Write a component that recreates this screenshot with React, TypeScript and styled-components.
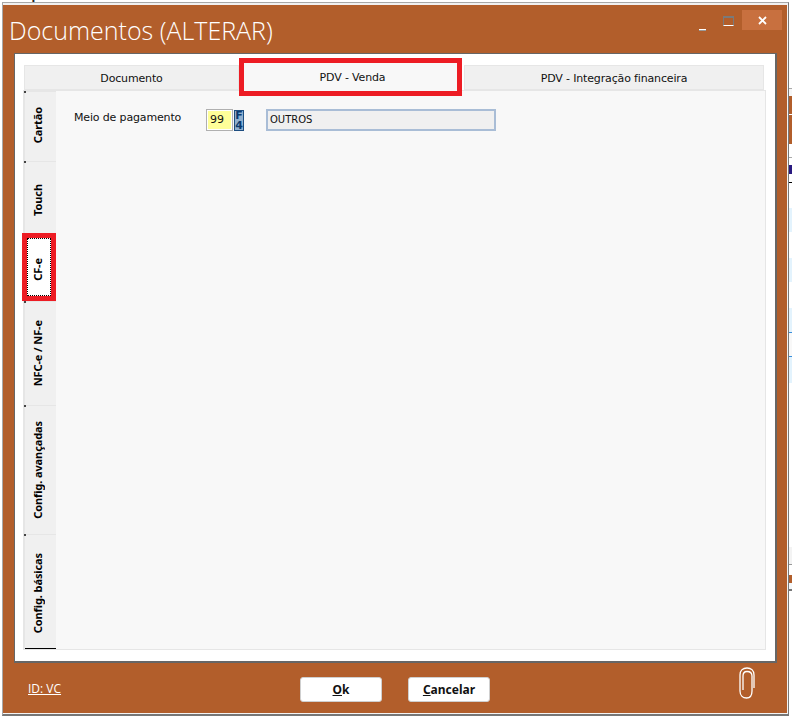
import React from "react";
import styled, { createGlobalStyle } from "styled-components";

const Global = createGlobalStyle`
  html, body { margin: 0; padding: 0; background: #fff; }
  body { font-family: "DejaVu Sans", "Liberation Sans", sans-serif; }
  * { box-sizing: border-box; }
`;

const brown = "#b25e2b";
const red = "#ed1c24";
const uiFont = `"DejaVu Sans", "Liberation Sans", sans-serif`;
const boldFont = `"Noto Sans", "Liberation Sans", sans-serif`;

const Page = styled.div`
  width: 792px;
  height: 719px;
  display: flex;
  overflow: hidden;
  background: #fff;
`;
const Main = styled.div`
  width: 789px;
  display: flex;
  flex-direction: column;
`;
const BehindText = styled.div`
  height: 2px;
  overflow: hidden;
  font: bold 11px/10px ${uiFont};
  color: #222;
  white-space: nowrap;
  & > span { display: block; margin-top: -8px; }
`;
const Frame = styled.div`
  margin-left: 2px;
  width: 787px;
  height: 714px;
  border: 1px solid #a8a8a8;
  border-right-color: #777;
  border-bottom: 2px solid #777;
`;
const Body = styled.div`
  height: 100%;
  background: ${brown};
  border-top: 2px solid #f0f0f0;
  border-right: 1px solid #f4f4f4;
  border-bottom: 1px solid #f4f4f4;
  display: flex;
  flex-direction: column;
`;
const TitleBar = styled.header`
  height: 48px;
  flex: none;
  display: flex;
  justify-content: space-between;
  align-items: flex-start;
  padding: 5px 5px 0 6px;
`;
const Title = styled.h1`
  margin: 4px 0 0;
  font: 300 25px/32px "Open Sans", "Noto Sans", sans-serif;
  color: #fff;
  white-space: nowrap;
`;
const Controls = styled.div`
  display: flex;
  align-items: flex-start;
`;
const MinBtn = styled.div`
  width: 7px;
  height: 2px;
  margin: 19px 17px 0 0;
  background: linear-gradient(#fff 50%, #9a9a9a 50%);
`;
const MaxBtn = styled.div`
  width: 11px;
  height: 10px;
  margin: 6px 8px 0 0;
  border: 1px solid #7a7a7a;
  border-top-width: 2px;
  border-bottom: 1px solid #fff;
`;
const CloseBtn = styled.div`
  width: 40px;
  height: 20px;
  background: #c8703f;
  display: flex;
  align-items: center;
  justify-content: center;
`;
const Panel = styled.section`
  height: 610px;
  flex: none;
  margin: 0 10px 0 11px;
  background: #fff;
  border: 1px solid #666;
  border-right-width: 2px;
  border-bottom-width: 2px;
  padding: 11px 9px 11px 8px;
  display: flex;
  flex-direction: column;
`;
const TopTabs = styled.nav`
  height: 25px;
  flex: none;
  display: flex;
  padding-left: 1px;
  position: relative;
  z-index: 2;
`;
const TopTab = styled.div<{ $w: number; $ml?: number; $active?: boolean }>`
  width: ${(p) => p.$w}px;
  margin-left: ${(p) => p.$ml ?? 0}px;
  flex: none;
  font: 11px/1 ${uiFont};
  letter-spacing: -0.15px;
  color: #111;
  display: flex;
  align-items: center;
  justify-content: center;
  background: ${(p) => (p.$active ? "#f8f8f8" : "#f0f0f0")};
  border: ${(p) => (p.$active ? `5px solid ${red}` : "1px solid #e6e6e6")};
  ${(p) => (p.$active ? "height: 38px; margin-top: -7px; padding-left: 4px;" : "padding-top: 2px;")}
`;
const TabBody = styled.div`
  flex: 1;
  display: flex;
  background: #f8f8f8;
  border: 1px solid #e6e6e6;
  min-height: 0;
`;
const SideTabs = styled.nav`
  width: 32px;
  flex: none;
  display: flex;
  flex-direction: column;
  background: #f0f0f0;
  border-left: 1px solid #e6e6e6;
`;
const SideTab = styled.div<{ $h: number; $active?: boolean; $nudge?: number }>`
  height: ${(p) => p.$h}px;
  flex: none;
  position: relative;
  display: flex;
  align-items: center;
  justify-content: center;
  padding: ${(p) => Math.max(0, (p.$nudge ?? 0) * 2)}px ${(p) => (p.$active ? 3 : 6)}px ${(p) => Math.max(0, -(p.$nudge ?? 0) * 2)}px 0;
  font: bold 11px/1 ${boldFont};
  letter-spacing: -0.1px;
  color: #000;
  border-top: 1px solid #e6e6e6;
  ${(p) =>
    p.$active
      ? `
    width: 34px;
    margin-left: -3px;
    border: 5px solid ${red};
    background: #fff;
    outline: 1px dotted #000;
    outline-offset: -6px;
    z-index: 3;
  `
      : `
    &::before {
      content: "";
      position: absolute;
      left: -1px;
      top: -1px;
      width: 2px;
      height: 2px;
      background: #444;
    }
  `}
`;
const SideLabel = styled.span`
  writing-mode: vertical-rl;
  transform: rotate(180deg);
  white-space: nowrap;
`;
const TabEnd = styled.div`
  height: 1px;
  background: #000;
  flex: none;
`;
const Content = styled.div`
  flex: 1;
  display: flex;
  align-items: flex-start;
  padding: 18px 0 0 18px;
`;
const FieldLabel = styled.label`
  width: 132px;
  flex: none;
  font: 11px/18px ${uiFont};
  letter-spacing: -0.15px;
  color: #111;
`;
const CodeBox = styled.div`
  width: 27px;
  height: 22px;
  flex: none;
  border: 1px solid #b0b0b0;
  background: #ffff99;
  box-shadow: inset 0 0 0 1px #fff;
  font: 11px/20px ${uiFont};
  color: #111;
  padding-left: 3px;
`;
const F4Btn = styled.div`
  width: 10px;
  height: 21px;
  margin: 1px 22px 0 1px;
  flex: none;
  border: 1px solid #1d4d80;
  background: #8fb0d0;
  font: bold 11px/9.5px ${uiFont};
  color: #0b3a6e;
  text-align: center;
  word-break: break-all;
  overflow: hidden;
`;
const NameBox = styled.div`
  width: 230px;
  height: 22px;
  flex: none;
  border: 2px solid #a9bdd6;
  background: #f0f0f0;
  font: 10px/18px ${uiFont};
  color: #111;
  padding-left: 2px;
`;
const Footer = styled.footer`
  flex: 1;
  display: flex;
  align-items: flex-start;
  padding: 14px 0 0 25px;
`;
const IdLink = styled.a`
  width: 272px;
  flex: none;
  margin-top: 4px;
  font: 12px/16px "Open Sans", sans-serif;
  color: #fff;
  text-decoration: underline;
`;
const ActionButton = styled.button<{ $ml?: number }>`
  width: 82px;
  height: 25px;
  margin-left: ${(p) => p.$ml ?? 0}px;
  flex: none;
  padding: 0;
  background: #fff;
  border: 1px solid #cfcfcf;
  border-radius: 3px;
  font: bold 12px/1 ${boldFont};
  color: #111;
`;
const Clip = styled.svg`
  margin: -10px 0 0 249px;
  flex: none;
`;
const Edge = styled.aside`
  width: 3px;
  flex: none;
  display: flex;
  flex-direction: column;
`;
const EdgeBit = styled.div<{ $h: number; $c: string }>`
  height: ${(p) => p.$h}px;
  background: ${(p) => p.$c};
  flex: none;
`;

const W = "#ffffff";
const LB = "#e3f3fd";
const edge: [number, string][] = [
  [88, W], [1, "#aaa"], [7, "#f6f6f6"], [18, brown], [1, W], [29, brown], [13, W], [1, "#aaa"],
  [7, W], [9, "#2a1a80"], [8, W], [1, "#000"], [25, W], [24, LB], [26, W], [24, LB], [26, W],
  [24, LB], [1, "#3a8fdc"], [23, "#f8f8f8"], [1, "#3a8fdc"], [26, LB], [164, W], [17, "#f3f3f3"],
  [1, "#999"], [10, W], [8, brown], [6, "#f3f7fa"], [2, "#777"],
];

const sideTabs = [
  { label: "Cartão", h: 70, nudge: -1 },
  { label: "Touch", h: 72, nudge: 2 },
  { label: "CF-e", h: 68, active: true, nudge: 2 },
  { label: "NFC-e / NF-e", h: 104, nudge: 0 },
  { label: "Config. avançadas", h: 129, nudge: 0 },
  { label: "Config. básicas", h: 114, nudge: 2 },
];

export default function App() {
  return (
    <Page>
      <Global />
      <Main>
        <BehindText><span>ato ap</span></BehindText>
        <Frame>
          <Body>
            <TitleBar>
              <Title>Documentos (ALTERAR)</Title>
              <Controls>
                <MinBtn />
                <MaxBtn />
                <CloseBtn>
                  <svg width="9" height="9" viewBox="0 0 9 9">
                    <path d="M1 1L8 8M8 1L1 8" stroke="#fff" strokeWidth="1.8" />
                  </svg>
                </CloseBtn>
              </Controls>
            </TitleBar>
            <Panel>
              <TopTabs>
                <TopTab $w={215}>Documento</TopTab>
                <TopTab $w={223} $active>PDV - Venda</TopTab>
                <TopTab $w={300} $ml={2}>PDV - Integração financeira</TopTab>
              </TopTabs>
              <TabBody>
                <SideTabs>
                  {sideTabs.map((t) => (
                    <SideTab key={t.label} $h={t.h} $active={t.active} $nudge={t.nudge}>
                      <SideLabel>{t.label}</SideLabel>
                    </SideTab>
                  ))}
                  <TabEnd />
                </SideTabs>
                <Content>
                  <FieldLabel>Meio de pagamento</FieldLabel>
                  <CodeBox>99</CodeBox>
                  <F4Btn>F4</F4Btn>
                  <NameBox>OUTROS</NameBox>
                </Content>
              </TabBody>
            </Panel>
            <Footer>
              <IdLink>ID: VC</IdLink>
              <ActionButton><u>O</u>k</ActionButton>
              <ActionButton $ml={26}><u>C</u>ancelar</ActionButton>
              <Clip width="16" height="32" viewBox="0 0 16 32" fill="none">
                <path
                  d="M15 21V8C15 3.5 12 1 8 1S1 3.5 1 8V24C1 28.5 4 31 7.5 31S13 28.5 13 24V9C13 6 11 4.5 8 4.5S4 6 4 9V23"
                  stroke="#fff"
                  strokeWidth="1.3"
                />
              </Clip>
            </Footer>
          </Body>
        </Frame>
      </Main>
      <Edge>
        {edge.map(([h, c], i) => (
          <EdgeBit key={i} $h={h} $c={c} />
        ))}
      </Edge>
    </Page>
  );
}
